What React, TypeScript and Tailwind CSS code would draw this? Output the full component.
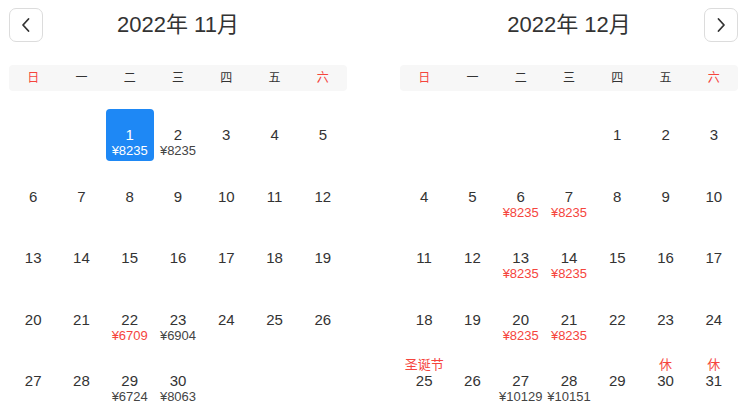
import React from 'react';

type DayInfo = {
  price?: string;
  low?: boolean;
  label?: string;
};

interface MonthProps {
  title: string;
  startDay: number;
  days: number;
  info: Record<number, DayInfo>;
  selected?: number;
  side: 'left' | 'right';
}

const WEEK = ['日', '一', '二', '三', '四', '五', '六'];

const Chevron = ({ dir }: { dir: 'left' | 'right' }) => (
  <svg width="10" height="16" viewBox="0 0 10 16" fill="none">
    <path
      d={dir === 'left' ? 'M7.5 2 L2 8 L7.5 14' : 'M2.5 2 L8 8 L2.5 14'}
      stroke="#333"
      strokeWidth="1.8"
      strokeLinecap="round"
      strokeLinejoin="round"
    />
  </svg>
);

const NavButton = ({ dir }: { dir: 'left' | 'right' }) => (
  <button className="flex h-[34px] w-[34px] items-center justify-center rounded-[7px] border border-[#dcdcdc] bg-white">
    <Chevron dir={dir} />
  </button>
);

const Month: React.FC<MonthProps> = ({ title, startDay, days, info, selected, side }) => {
  const cells: (number | null)[] = [];
  for (let i = 0; i < startDay; i++) cells.push(null);
  for (let d = 1; d <= days; d++) cells.push(d);

  return (
    <div className="w-[338px]">
      <div className="grid h-[34px] grid-cols-[34px_1fr_34px] items-center">
        {side === 'left' ? <NavButton dir="left" /> : <div />}
        <div className="text-center text-[22px] leading-none text-[#333]">{title}</div>
        {side === 'right' ? <NavButton dir="right" /> : <div />}
      </div>

      <div className="mt-[23px] grid h-[26px] grid-cols-7 items-center rounded-[4px] bg-[#f7f7f7] text-[12px]">
        {WEEK.map((w, i) => (
          <div
            key={w}
            className={`text-center ${i === 0 || i === 6 ? 'text-[#f5453d]' : 'text-[#333]'}`}
          >
            {w}
          </div>
        ))}
      </div>

      <div className="mt-[18px] grid grid-cols-7 gap-y-[9.5px]">
        {cells.map((d, idx) => {
          if (d === null) return <div key={`e${idx}`} className="h-[52px]" />;
          const item = info[d] || {};
          const isSel = d === selected;
          return (
            <div
              key={d}
              className={`flex h-[52px] flex-col items-center pt-[3px] ${
                isSel ? 'rounded-[4px] bg-[#1e88f5] text-white' : 'text-[#333]'
              }`}
            >
              <div className="h-[14px] whitespace-nowrap text-[13px] leading-[14px] text-[#f5453d]">
                {item.label}
              </div>
              <div className="h-[18px] text-[15px] leading-[18px]">{d}</div>
              <div
                className={`h-[14px] whitespace-nowrap text-[13px] leading-[14px] ${
                  isSel ? 'text-white' : item.low ? 'text-[#f5453d]' : 'text-[#444]'
                }`}
              >
                {item.price}
              </div>
            </div>
          );
        })}
      </div>
    </div>
  );
};

const novInfo: Record<number, DayInfo> = {
  1: { price: '¥8235' },
  2: { price: '¥8235' },
  22: { price: '¥6709', low: true },
  23: { price: '¥6904' },
  29: { price: '¥6724' },
  30: { price: '¥8063' },
};

const decInfo: Record<number, DayInfo> = {
  6: { price: '¥8235', low: true },
  7: { price: '¥8235', low: true },
  13: { price: '¥8235', low: true },
  14: { price: '¥8235', low: true },
  20: { price: '¥8235', low: true },
  21: { price: '¥8235', low: true },
  25: { label: '圣诞节' },
  27: { price: '¥10129' },
  28: { price: '¥10151' },
  30: { label: '休' },
  31: { label: '休' },
};

export default function App() {
  return (
    <div
      className="h-[416px] w-[754px] overflow-hidden bg-white"
      style={{ fontFamily: '"Liberation Sans", "Noto Sans CJK SC", sans-serif' }}
    >
      <div className="flex gap-[53px] px-[9px] pt-[8px]">
        <Month title="2022年 11月" startDay={2} days={30} info={novInfo} selected={1} side="left" />
        <Month title="2022年 12月" startDay={4} days={31} info={decInfo} side="right" />
      </div>
    </div>
  );
}
